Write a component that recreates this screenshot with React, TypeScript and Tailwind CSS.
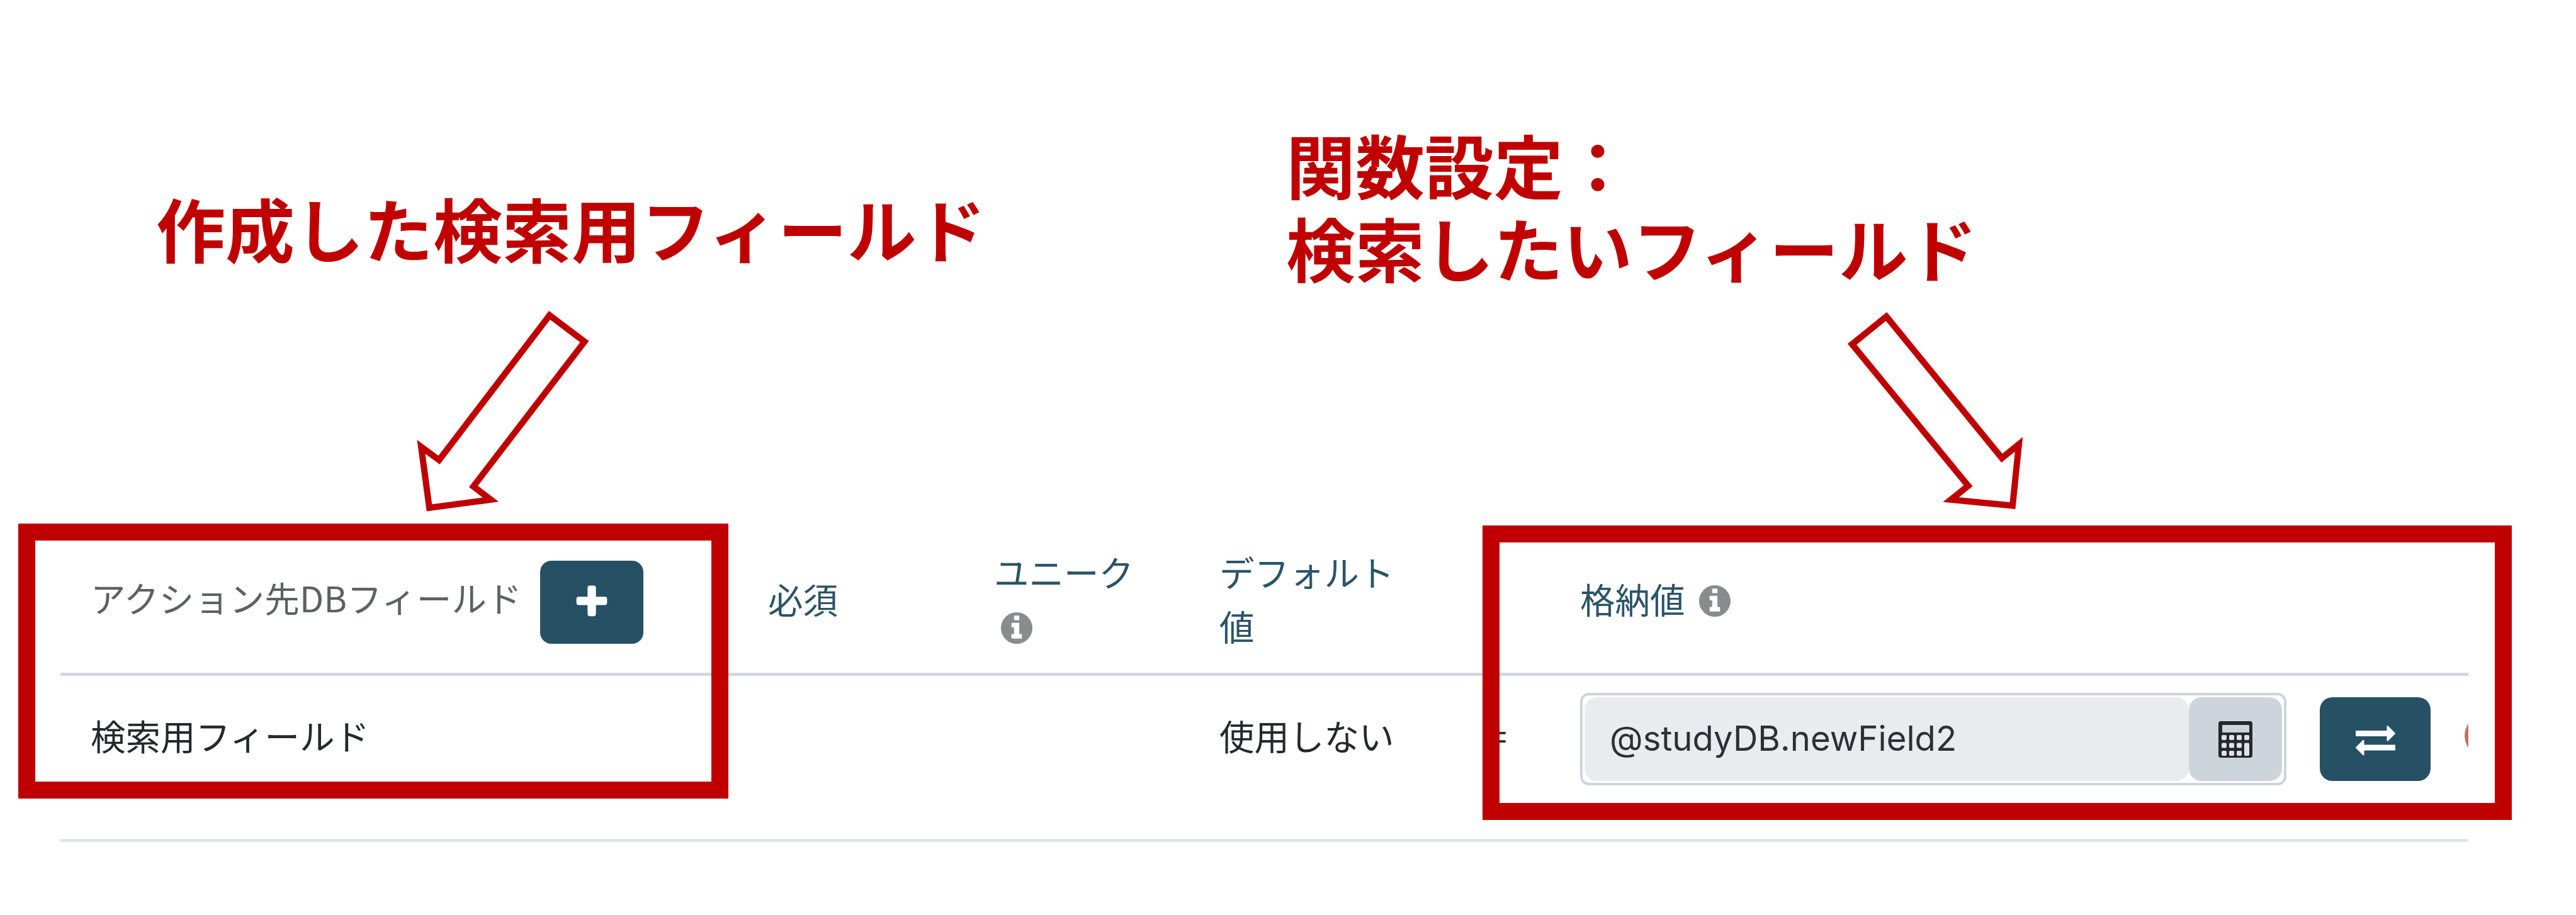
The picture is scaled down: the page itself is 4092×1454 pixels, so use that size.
const GRID = 'grid grid-cols-[1054px_358px_350px_432px_128px_1503px]';

const InfoIcon = () => (
  <svg
    className="size-[50px] shrink-0"
    viewBox="128 128 1536 1536"
    fill="#8a8b8c"
  >
    <path d="M1152 1376v-160q0-14-9-23t-23-9h-96v-512q0-14-9-23t-23-9h-320q-14 0-23 9t-9 23v160q0 14 9 23t23 9h96v320h-96q-14 0-23 9t-9 23v160q0 14 9 23t23 9h448q14 0 23-9t9-23zm-128-896v-160q0-14-9-23t-23-9h-192q-14 0-23 9t-9 23v160q0 14 9 23t23 9h192q14 0 23-9t9-23zm640 416q0 209-103 385.5t-279.5 279.5-385.5 103-385.5-103-279.5-279.5-103-385.5 103-385.5 279.5-279.5 385.5-103 385.5 103 279.5 279.5 103 385.5z" />
  </svg>
);

const PlusIcon = () => (
  <svg className="size-[62px]" viewBox="0 0 1792 1792" fill="currentColor">
    <path d="M1600 736v192q0 40-28 68t-68 28h-416v416q0 40-28 68t-68 28h-192q-40 0-68-28t-28-68v-416h-416q-40 0-68-28t-28-68v-192q0-40 28-68t68-28h416v-416q0-40 28-68t68-28h192q40 0 68 28t28 68v416h416q40 0 68 28t28 68z" />
  </svg>
);

const ExchangeIcon = () => (
  <svg className="size-[63px]" viewBox="0 0 1792 1792" fill="currentColor">
    <path d="M1792 1184v192q0 13-9.5 22.5t-22.5 9.5h-1376v192q0 13-9.5 22.5t-22.5 9.5q-12 0-24-10l-319-320q-9-9-9-22 0-14 9-23l320-320q9-9 23-9 13 0 22.5 9.5t9.5 22.5v192h1376q13 0 22.5 9.5t9.5 22.5zm0-544q0 14-9 23l-320 320q-9 9-23 9-13 0-22.5-9.5t-9.5-22.5v-192h-1376q-13 0-22.5-9.5t-9.5-22.5v-192q0-13 9.5-22.5t22.5-9.5h1376v-192q0-14 9-23t23-9q12 0 24 10l319 319q9 9 9 23z" />
  </svg>
);

const CALC_KEYS = [
  [5, 22], [17, 22], [29, 22], [41, 22],
  [5, 34.5], [17, 34.5], [29, 34.5],
  [5, 47], [17, 47], [29, 47],
];

const CalculatorIcon = () => (
  <svg className="h-[58px] w-[54px]" viewBox="0 0 54 58">
    <rect width="54" height="58" rx="4" fill="#24292e" />
    <g fill="#dfe3e8">
      <rect x="6" y="6" width="43" height="12" rx="1" fill="#ced4dc" />
      {CALC_KEYS.map(([x, y]) => (
        <rect key={`${x}-${y}`} x={x} y={y} width="8" height="8" rx="2" />
      ))}
      <rect x="41" y="34.5" width="8" height="20.5" rx="2" />
    </g>
  </svg>
);

const Arrow = ({ points, className }: { points: string; className: string }) => (
  <svg
    className={className}
    fill="none"
    stroke="#c00000"
    strokeWidth="10"
    strokeMiterlimit="10"
  >
    <polygon points={points} />
  </svg>
);

const FieldTable = () => (
  <div className="ml-24 w-[3825px] overflow-hidden text-[55.5px] leading-[86px] whitespace-nowrap">
    {/* Header */}
    <div
      className={`${GRID} h-[242px] items-center border-b-[5px] border-[#d0d7dd] text-[#2a5469]`}
    >
      <div className="flex items-center pl-[48px] text-[#5d6064]">
        <span className="w-[714px] pb-[4px] tracking-[0.3px]">
          アクション先DBフィールド
        </span>
        <button className="mt-[13px] flex h-[132px] w-[164px] items-center justify-center rounded-[18px] bg-[#265064] text-white">
          <PlusIcon />
        </button>
      </div>
      <div className="pl-[70px]">必須</div>
      <div className="pl-[71px]">
        ユニーク
        <div className="flex h-[86px] items-center pt-[8px] pl-[11px]">
          <InfoIcon />
        </div>
      </div>
      <div className="pl-[79px]">
        デフォルト
        <br />値
      </div>
      <div />
      <div className="flex items-center pl-[92px]">
        <span className="w-[189px]">格納値</span>
        <div className="pt-[8px]">
          <InfoIcon />
        </div>
      </div>
    </div>

    {/* Row */}
    <div
      className={`${GRID} h-[264px] border-b-[5px] border-[#e2e4e7] text-[#24292e]`}
    >
      <div className="pt-[51px] pl-[48px]">検索用フィールド</div>
      <div />
      <div />
      <div className="pt-[51px] pl-[79px]">使用しない</div>
      <div className="pt-[51px] pl-[73px]">=</div>
      <div className="flex items-start pt-[27px] pl-[92px]">
        <div className="flex h-[147px] w-[1122px] shrink-0 rounded-[14px] border-4 border-[#ced4da] p-[3px]">
          <div className="flex flex-1 items-center rounded-[20px] bg-[#e8ecef] pb-[4px] pl-[40px] font-['Inter','Noto_Sans_CJK_JP',sans-serif] text-[54.5px] text-[#2b3035]">
            @studyDB.newField2
          </div>
          <div className="flex w-[148px] items-center justify-center rounded-[20px] bg-[#ced4dc]">
            <CalculatorIcon />
          </div>
        </div>
        <button className="mt-[7px] ml-[53px] flex h-[133px] w-[176px] shrink-0 items-center justify-center rounded-[20px] bg-[#265064] text-white">
          <ExchangeIcon />
        </button>
        <div className="mt-[35px] ml-[54px] size-[66px] shrink-0 rounded-full bg-[#c0735c]" />
      </div>
    </div>
  </div>
);

export default function App() {
  return (
    <div className="relative h-[1454px] w-[4092px] overflow-hidden bg-white font-['Noto_Sans_CJK_JP',sans-serif]">
      <div className="flex h-[832px] text-[110px] leading-[132px] font-bold whitespace-nowrap text-[#c00000]">
        <h2 className="w-[2043px] pt-[295px] pl-[248px]">
          作成した検索用フィールド
        </h2>
        <h2 className="pt-[194px]">
          関数設定：
          <br />
          検索したいフィールド
        </h2>
      </div>
      <FieldTable />

      {/* Callouts */}
      <Arrow
        className="absolute top-0 left-0 h-[832px] w-[1200px]"
        points="873,501 928.5,543 752,773 779.5,794 682,807 669,710 697.5,731"
      />
      <Arrow
        className="absolute top-0 left-0 h-[832px] w-[3400px]"
        points="2996.5,503 2942,547 3126.5,772 3099,794 3197,803.5 3207,706 3180,728"
      />
      <div className="absolute top-[832px] left-[29px] h-[437px] w-[1128px] border-[27px] border-[#c00000]" />
      <div className="absolute top-[835px] left-[2355px] h-[468px] w-[1635px] border-[27px] border-[#c00000]" />
    </div>
  );
}
